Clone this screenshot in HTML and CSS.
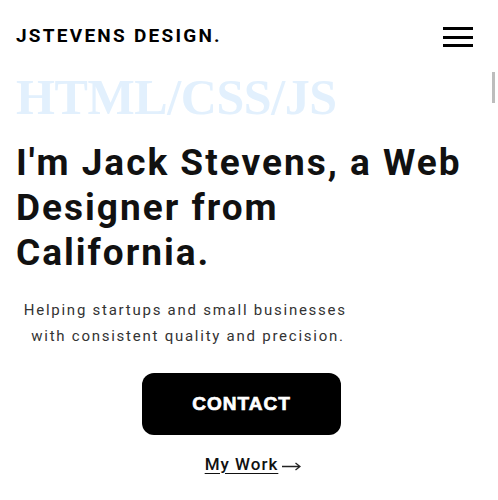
FILE: index.html
```html
<!DOCTYPE html>
<html lang="en">
<head>
<meta charset="utf-8">
<title>JStevens Design</title>
<link rel="stylesheet" href="styles.css">
</head>
<body>
<header class="site-header">
  <a class="logo" href="#">JSTEVENS DESIGN.</a>
  <button class="menu-toggle" aria-label="Menu">
    <span class="bar"></span><span class="bar"></span><span class="bar"></span>
  </button>
</header>
<main class="hero">
  <div class="scroll-indicator"></div>
  <div class="tagline">HTML/CSS/JS</div>
  <h1 class="headline">I'm Jack Stevens, a Web Designer from California.</h1>
  <p class="intro">Helping startups and small businesses&nbsp;<br>with consistent quality and precision.</p>
  <div class="actions">
    <a class="btn-contact" href="#">CONTACT</a>
    <a class="work-link" href="#"><span class="work-text">My Work</span><svg class="arrow" width="19" height="10" viewBox="0 0 19 10"><path d="M0 5.5H17.5M13.5 2L18 5.5L13.5 9" fill="none" stroke="#222" stroke-width="1.3"/></svg></a>
  </div>
</main>
</body>
</html>
```
FILE: styles.css
```css
* { box-sizing: border-box; }
html, body { margin: 0; padding: 0; background: #fff; }
body { font-family: Roboto, "Noto Sans", sans-serif; color: #111; width: 498px; height: 500px; overflow: hidden; position: relative; }

.site-header {
  display: flex;
  align-items: center;
  justify-content: space-between;
  padding: 24px 25px 0 16px;
  height: 50px;
}
.logo {
  font-family: Roboto, sans-serif;
  font-weight: 700;
  font-size: 19px;
  letter-spacing: 2.25px;
  color: #000;
  text-decoration: none;
  margin-top: -3px;
}
.menu-toggle {
  display: flex;
  flex-direction: column;
  gap: 5.5px;
  width: 30px;
  padding: 0;
  border: 0;
  background: none;
}
.bar { display: block; width: 30px; height: 3px; background: #000; }

.hero { padding: 0 16px; }
.scroll-indicator {
  position: absolute;
  left: 492px;
  top: 72px;
  width: 3px;
  height: 31px;
  background: #bdbdbd;
}
.tagline {
  font-family: "Liberation Serif", "DejaVu Serif", serif;
  font-weight: 700;
  font-size: 50px;
  line-height: 1;
  color: #e2f0fd;
  margin-top: 22px;
  letter-spacing: -0.4px;
}
.headline {
  font-family: Roboto, sans-serif;
  font-weight: 700;
  font-size: 37px;
  line-height: 45px;
  letter-spacing: 2px;
  margin: 18px 0 0;
  max-width: 450px;
  color: #111;
}
.intro {
  width: 344px;
  text-align: center;
  font-size: 15px;
  line-height: 26px;
  letter-spacing: 1.75px;
  color: #333;
  margin: 22px 0 0;
}
.actions {
  width: 451px;
  display: flex;
  flex-direction: column;
  align-items: center;
  margin-top: 24px;
}
.btn-contact {
  display: flex;
  align-items: center;
  justify-content: center;
  width: 199px;
  height: 62px;
  border-radius: 12px;
  background: #000;
  color: #fff;
  text-decoration: none;
  font-family: "Liberation Sans", Arial, sans-serif;
  font-weight: 700;
  font-size: 19px;
  letter-spacing: 1px;
  -webkit-text-stroke: 0.7px #fff;
}
.work-link {
  position: relative;
  margin-top: 19px;
  color: #111;
  text-decoration: none;
  font-size: 17px;
  font-weight: 500;
  letter-spacing: 1px;
}
.work-text { text-decoration: underline; text-underline-offset: 3px; }
.arrow {
  position: absolute;
  left: 100%;
  margin-left: 4px;
  top: 7px;
}
```
